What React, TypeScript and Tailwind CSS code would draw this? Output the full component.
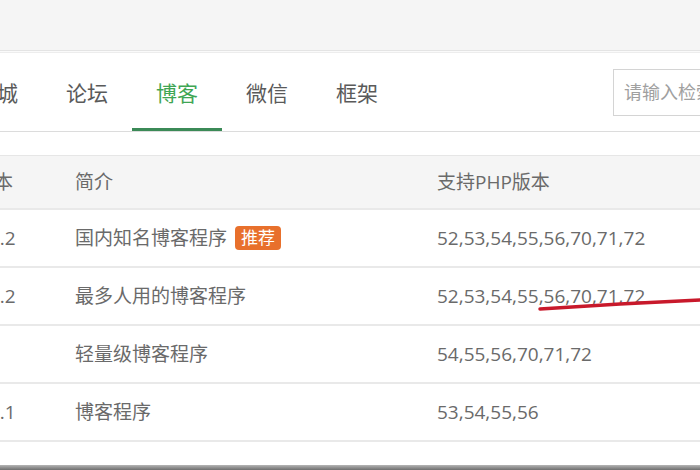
const tabs = ["商城", "论坛", "博客", "微信", "框架"];

const rows = [
  { ver: "5.2.2", desc: "国内知名博客程序", hot: true, php: "52,53,54,55,56,70,71,72" },
  { ver: "5.2.2", desc: "最多人用的博客程序", hot: false, php: "52,53,54,55,56,70,71,72" },
  { ver: "1.1", desc: "轻量级博客程序", hot: false, php: "54,55,56,70,71,72" },
  { ver: "6.2.1", desc: "博客程序", hot: false, php: "53,54,55,56" },
];

const App = () => {
  return (
    <div
      className="relative flex h-[470px] w-[700px] flex-col overflow-hidden bg-white"
      style={{ fontFamily: '"Open Sans", "Noto Sans CJK SC", sans-serif' }}
    >
      {/* top strip */}
      <div className="h-[51px] shrink-0 border-b border-[#e4e4e4] bg-[#f5f5f5]" />
      <div className="h-[2px] shrink-0 border-b border-[#ededed] bg-[#fafafa]" />

      {/* tabs */}
      <div className="flex h-[79px] shrink-0 items-center border-b border-[#dcdcdc]">
        <div className="-ml-[48px] flex h-full">
          {tabs.map((t) => (
            <div
              key={t}
              className={
                t === "博客"
                  ? "flex h-full w-[90px] items-center justify-center border-b-[3px] border-[#3b8a57] pt-[6px] text-[21px] text-[#3fa654]"
                  : "flex h-full w-[90px] items-center justify-center pt-[3px] text-[21px] text-[#5a5a5a]"
              }
            >
              {t}
            </div>
          ))}
        </div>
        <div className="ml-[211px] flex h-[47px] w-[150px] shrink-0 items-center border border-[#d4d4d4] pl-[10px] text-[18px] text-[#a0a0a0]">
          请输入检索词
        </div>
      </div>

      {/* table */}
      <div className="mt-[23px] border-t border-[#e6e6e6]">
        <div className="flex h-[54px] items-center border-b-2 border-[#e9e9e9] bg-[#f5f5f5] text-[19px] text-[#6a6a6a]">
          <div className="-ml-[25px] w-[85px] shrink-0">版本</div>
          <div className="w-[362px] shrink-0 pl-[15px]">简介</div>
          <div className="pl-[15px]">支持PHP版本</div>
        </div>
        {rows.map((r, i) => (
          <div
            key={i}
            className="flex h-[58px] items-center border-b-2 border-[#e9e9e9] text-[19px] text-[#6a6a6a]"
          >
            <div className="-ml-[27px] w-[87px] shrink-0">{r.ver}</div>
            <div className="flex w-[362px] shrink-0 items-center gap-[8px] pl-[15px]">
              {r.desc}
              {r.hot && (
                <span className="rounded-[4px] bg-[#e8702c] px-[6px] text-[17px] leading-[24px] text-white">
                  推荐
                </span>
              )}
            </div>
            <div className="pl-[15px]">{r.php}</div>
          </div>
        ))}
      </div>

      <div className="mt-auto h-[5px] shrink-0 bg-gradient-to-b from-[#b5b5b5] to-[#6f6f6f]" />

      {/* hand-drawn red mark */}
      <svg className="pointer-events-none absolute inset-0" width="700" height="470">
        <path
          d="M540 309 L620 304 L700 300"
          stroke="#c8192b"
          strokeWidth="3.5"
          strokeLinecap="round"
          fill="none"
        />
      </svg>
    </div>
  );
};

export default App;
